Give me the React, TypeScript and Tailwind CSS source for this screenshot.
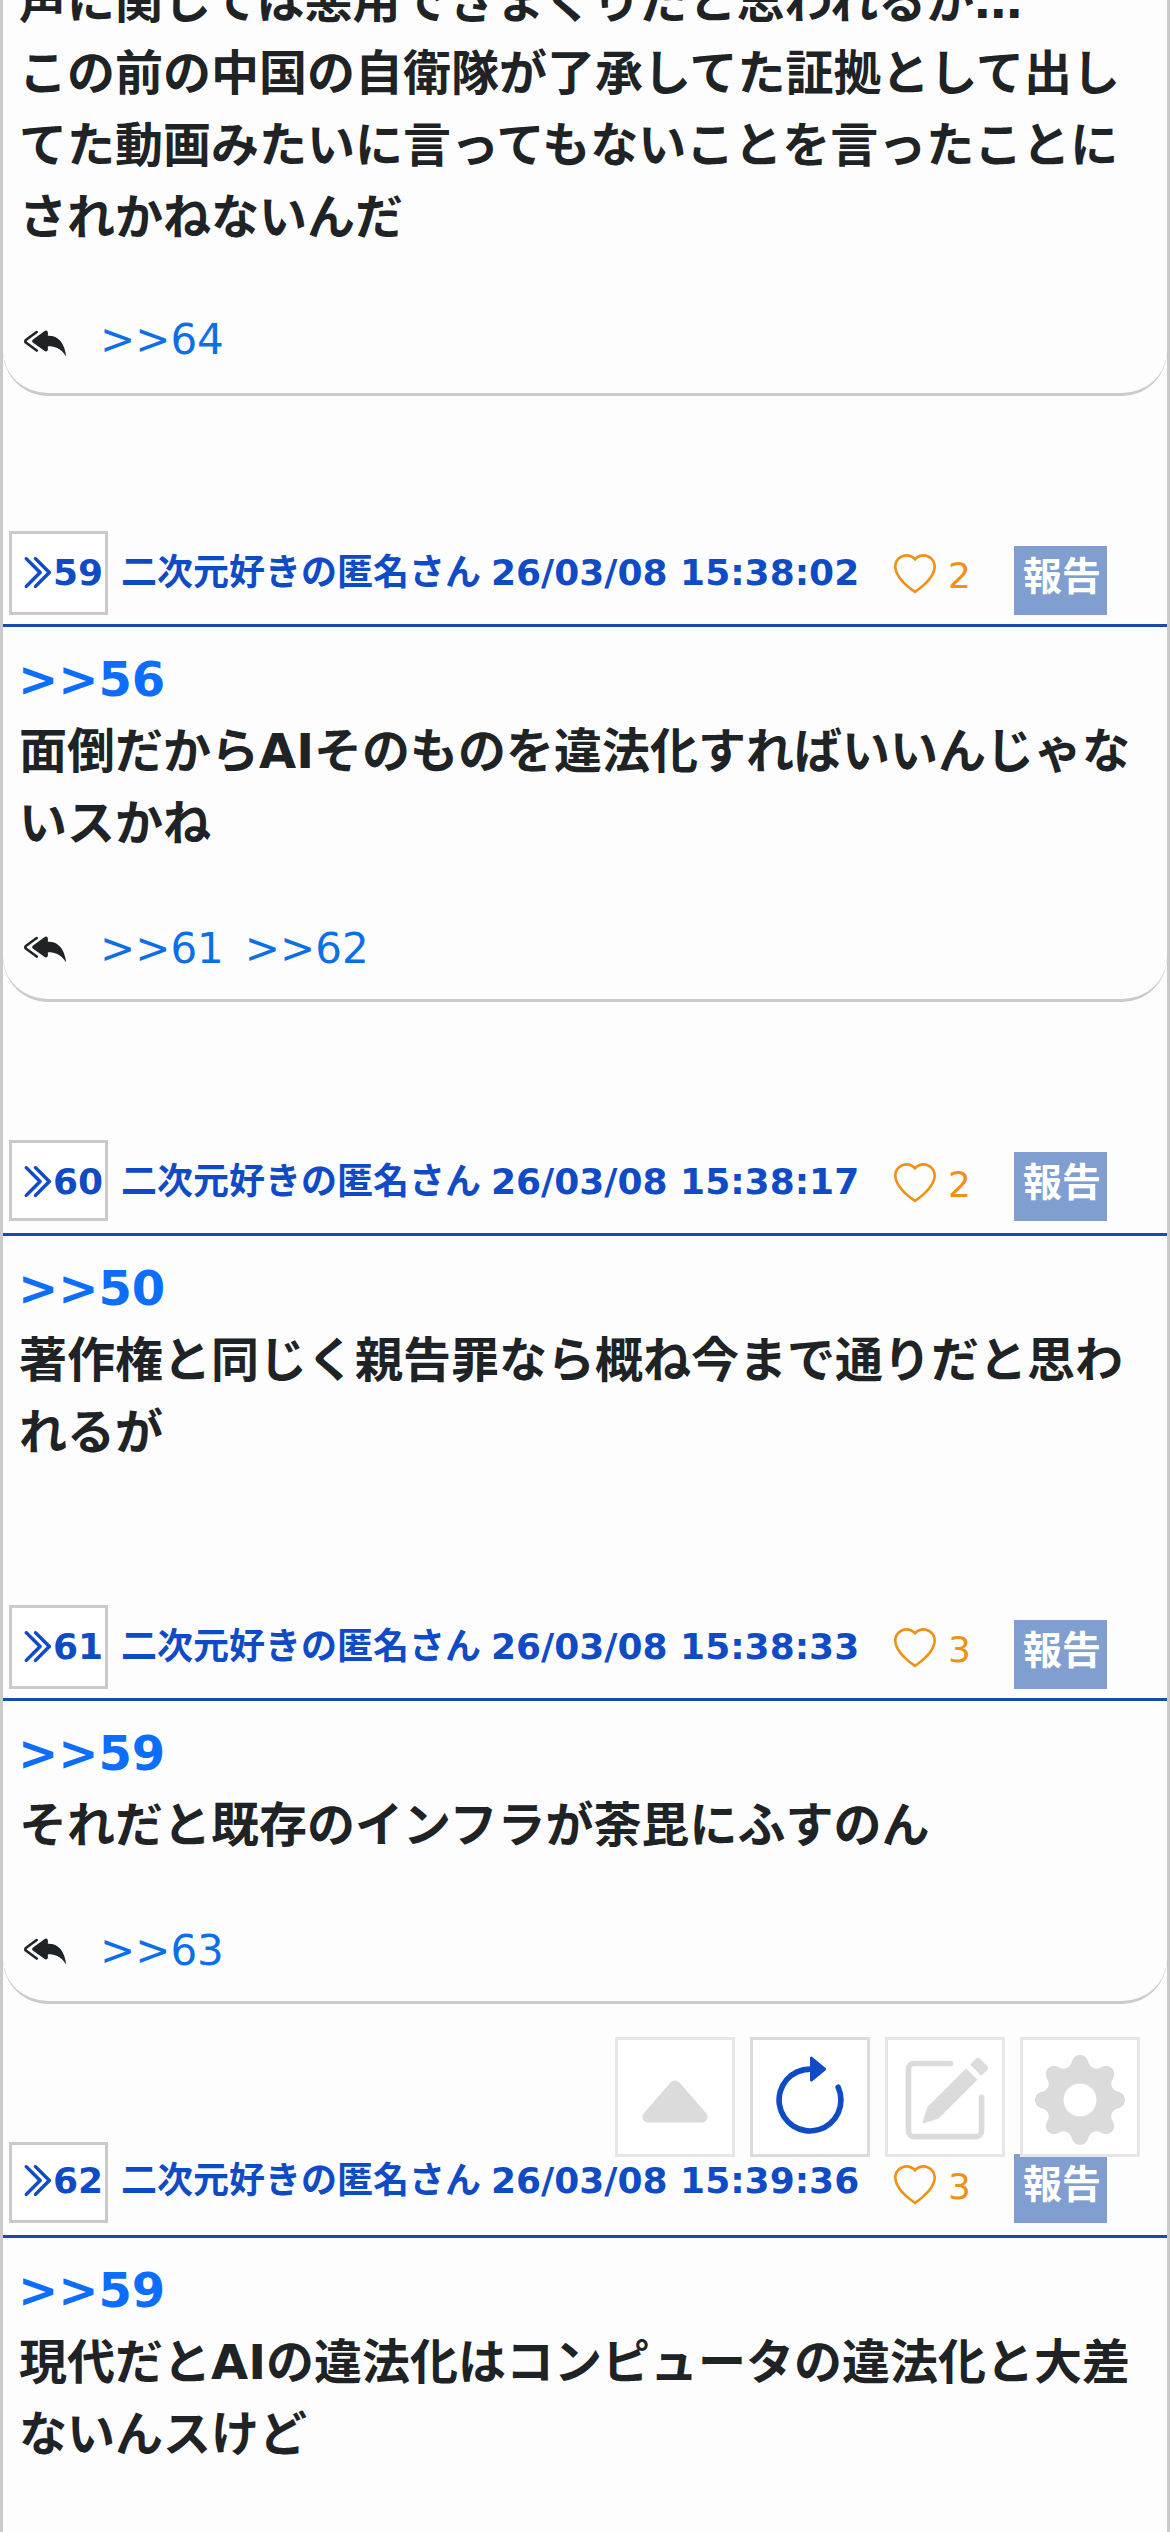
import {
  BsArrowClockwise,
  BsCaretUpFill,
  BsChevronDoubleRight,
  BsGearFill,
  BsHeart,
  BsPencilSquare,
  BsReplyAllFill,
} from "react-icons/bs"

interface Post {
  no: number
  date: string
  likes: number
  anchor: string
  lines: string[]
  replies: string[]
  gap: string
  box: string
  name: string
  report: string
  body: string
}

const posts: Post[] = [
  {
    no: 59,
    date: "26/03/08 15:38:02",
    likes: 2,
    anchor: ">>56",
    lines: ["面倒だからAIそのものを違法化すればいいんじゃな", "いスかね"],
    replies: [">>61", ">>62"],
    gap: "mt-[135px]",
    box: "h-[84px] pt-3",
    name: "mt-[15px]",
    report: "mt-[15px]",
    body: "h-[375px]",
  },
  {
    no: 60,
    date: "26/03/08 15:38:17",
    likes: 2,
    anchor: ">>50",
    lines: ["著作権と同じく親告罪なら概ね今まで通りだと思わ", "れるが"],
    replies: [],
    gap: "mt-[138px]",
    box: "h-[81px] pt-3",
    name: "mt-[15px]",
    report: "mt-[12px]",
    body: "h-[231px]",
  },
  {
    no: 61,
    date: "26/03/08 15:38:33",
    likes: 3,
    anchor: ">>59",
    lines: ["それだと既存のインフラが荼毘にふすのん"],
    replies: [">>63"],
    gap: "mt-[138px]",
    box: "h-[84px] pt-3",
    name: "mt-[15px]",
    report: "mt-[15px]",
    body: "h-[303px]",
  },
  {
    no: 62,
    date: "26/03/08 15:39:36",
    likes: 3,
    anchor: ">>59",
    lines: ["現代だとAIの違法化はコンピュータの違法化と大差", "ないんスけど"],
    replies: [],
    gap: "mt-[138px]",
    box: "h-[81px] pt-[9px]",
    name: "mt-[12px]",
    report: "mt-[12px]",
    body: "h-[375px]",
  },
]

function Replies({ items, className = "pt-[5px]" }: { items: string[]; className?: string }) {
  return (
    <div className="flex items-center h-[110px] pl-[21px] rounded-b-[45px] border-b-[3px] border-[#c9caca]">
      <BsReplyAllFill className="size-[42px] mt-[3px] text-[#202325]" />
      <div className={`flex gap-[21px] pl-[34px] text-[42px] text-[#0d6fe8] ${className}`}>
        {items.map((item) => (
          <a key={item}>{item}</a>
        ))}
      </div>
    </div>
  )
}

function PostHeader({ post }: { post: Post }) {
  return (
    <div className={`flex items-start h-[96px] border-b-[3px] border-[#1a4ba8] pl-[6px] ${post.gap}`}>
      <div className={`flex w-[99px] border-[3px] border-[#c9caca] bg-white text-[#104bc6] ${post.box}`}>
        <BsChevronDoubleRight className="size-[37px] mt-2 ml-[5px] shrink-0" strokeWidth={0.5} />
        <b className="text-[36px] leading-[54px] -ml-px">{post.no}</b>
      </div>
      <b className={`flex w-[740px] ml-[13px] text-[36px] leading-[54px] text-[#104bc6] whitespace-nowrap ${post.name}`}>
        <span className="w-[370px]">二次元好きの匿名さん</span>
        <span>{post.date}</span>
      </b>
      <BsHeart className="size-[42px] mt-[23px] ml-[33px] text-[#ee9116] shrink-0" />
      <span className="w-[66px] ml-3 mt-[18px] text-[36px] leading-[54px] text-[#ee9116]">{post.likes}</span>
      <div
        className={`w-[93px] h-[69px] pt-px pl-[9px] bg-[#809fd0] text-white text-[39px] leading-[60px] font-bold whitespace-nowrap ${post.report}`}
      >
        報告
      </div>
    </div>
  )
}

function Toolbar() {
  const box = "flex justify-center size-[120px] pt-[15px] border-[3px] bg-white"
  return (
    <div className="absolute left-[612px] top-[2037px] flex gap-[15px] text-[#dbdbdb]">
      <div className={`${box} border-[#e6e6e6]`}>
        <BsCaretUpFill className="size-[90px]" />
      </div>
      <div className={`${box} border-[#dbdbdb]`}>
        <BsArrowClockwise className="size-[90px] text-[#104bc6]" />
      </div>
      <div className={`${box} border-[#e6e6e6]`}>
        <BsPencilSquare className="size-[90px]" />
      </div>
      <div className={`${box} border-[#e6e6e6]`}>
        <BsGearFill className="size-[90px]" />
      </div>
    </div>
  )
}

export default function App() {
  return (
    <div className="relative w-[1170px] h-[2532px] overflow-hidden bg-[#fdfdfd] border-x-[3px] border-[#c9caca] font-['DejaVu_Sans','Noto_Sans_CJK_JP',sans-serif]">
      <div className="-mt-[35px] h-[321px] px-4 text-[48px] leading-[72px] font-bold text-[#202325] whitespace-nowrap">
        <p>声に関しては悪用できまくりだと思われるが…</p>
        <p>この前の中国の自衛隊が了承してた証拠として出し</p>
        <p>てた動画みたいに言ってもないことを言ったことに</p>
        <p>されかねないんだ</p>
      </div>
      <Replies items={[">>64"]} className="pt-0" />
      {posts.map((post) => (
        <section key={post.no} className="flow-root">
          <PostHeader post={post} />
          <div className={`flex flex-col justify-between pt-4 ${post.body}`}>
            <div className="px-4 text-[48px] leading-[72px] font-bold text-[#202325] whitespace-nowrap">
              <a className="block -ml-px text-[#0d6efd]">{post.anchor}</a>
              {post.lines.map((line) => (
                <p key={line}>{line}</p>
              ))}
            </div>
            {post.replies.length > 0 && <Replies items={post.replies} />}
          </div>
        </section>
      ))}
      <Toolbar />
    </div>
  )
}
